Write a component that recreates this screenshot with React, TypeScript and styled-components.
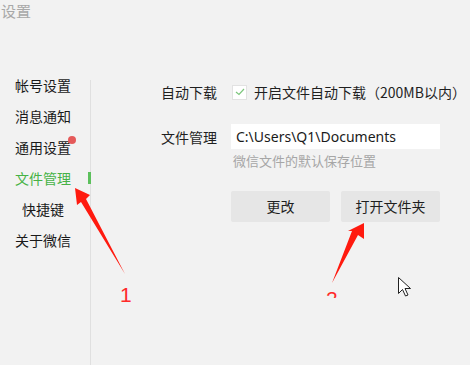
import React from "react";
import styled, { createGlobalStyle } from "styled-components";

const GlobalStyle = createGlobalStyle`
  html, body {
    margin: 0;
    padding: 0;
    background: #f2f2f2;
  }
  body {
    font-family: "Noto Sans CJK SC", "Noto Sans", sans-serif;
    color: #1f1f1f;
  }
`;

const menu = ["帐号设置", "消息通知", "通用设置", "文件管理", "快捷键", "关于微信"];

const App = () => {
  return (
    <Page>
      <GlobalStyle />
      <TitleBar>设置</TitleBar>
      <Main>
        <Sidebar>
          {menu.map((item, i) => (
            <MenuItem key={item} active={i === 3}>
              {item}
              {i === 2 && <RedDot />}
              {i === 3 && <ActiveMark />}
            </MenuItem>
          ))}
        </Sidebar>
        <Divider />
        <Content>
          <Row>
            <Label>自动下载</Label>
            <Checkbox>
              <svg width="10" height="8" viewBox="0 0 10 8">
                <path d="M1 4 L4 6.5 L9 1" fill="none" stroke="#7cc67c" strokeWidth="1.2" />
              </svg>
            </Checkbox>
            <span>开启文件自动下载（200MB以内）</span>
          </Row>
          <InputRow>
            <Label>文件管理</Label>
            <PathBox>C:\Users\Q1\Documents</PathBox>
          </InputRow>
          <Hint>微信文件的默认保存位置</Hint>
          <Buttons>
            <Button>更改</Button>
            <Button>打开文件夹</Button>
          </Buttons>
        </Content>
      </Main>

      <Annotations width="470" height="365" viewBox="0 0 470 365">
        <polygon points="75,188 90,195 86,199 125,274 81,202 77,205" fill="#ff1a0f" />
        <polygon points="364,223 364,239 358,235 332,283 352,231 348,231" fill="#ff1a0f" />
        <path
          d="M398.5 277.5 L398.5 293.5 L402.5 289.5 L405.5 296 L408 295 L405 288.5 L410.5 288.5 Z"
          fill="#fff"
          stroke="#222"
          strokeWidth="1"
        />
      </Annotations>
      <Number1>1</Number1>
      <Number2>
        <span>2</span>
      </Number2>
    </Page>
  );
};

export default App;

const Page = styled.div`
  position: relative;
  width: 470px;
  height: 365px;
  overflow: hidden;
  display: flex;
  flex-direction: column;
  background: #f2f2f2;
`;

const TitleBar = styled.div`
  height: 70px;
  padding-left: 1px;
  font-size: 15px;
  line-height: 22px;
  color: #a8a8a8;
`;

const Main = styled.div`
  flex: 1;
  display: flex;
`;

const Sidebar = styled.div`
  width: 88px;
  display: flex;
  flex-direction: column;
`;

const MenuItem = styled.div<{ active?: boolean }>`
  position: relative;
  height: 31px;
  line-height: 31px;
  width: 86px;
  text-align: center;
  font-size: 14px;
  color: ${(p) => (p.active ? "#46b246" : "#1a1a1a")};
`;

const RedDot = styled.span`
  position: absolute;
  left: 68px;
  top: 4px;
  width: 8px;
  height: 8px;
  border-radius: 50%;
  background: #e55a5a;
`;

const ActiveMark = styled.span`
  position: absolute;
  left: 88px;
  top: 9px;
  width: 3px;
  height: 12px;
  background: #5cc05c;
`;

const Divider = styled.div`
  width: 1px;
  margin-top: 10px;
  margin-left: 2px;
  background: #e0e0e0;
`;

const Content = styled.div`
  flex: 1;
  padding-left: 70px;
  padding-top: 8px;
  display: flex;
  flex-direction: column;
  font-size: 14px;
  color: #1f1f1f;
`;

const Row = styled.div`
  height: 28px;
  display: flex;
  align-items: center;
`;

const InputRow = styled(Row)`
  height: 25px;
  margin-top: 18px;
`;

const Label = styled.div`
  width: 70px;
  flex-shrink: 0;
`;

const Checkbox = styled.div`
  width: 13px;
  height: 13px;
  margin-left: 1px;
  margin-right: 7px;
  background: #fff;
  border: 1px solid #e2e2e2;
  display: flex;
  align-items: center;
  justify-content: center;
`;

const PathBox = styled.div`
  width: 204px;
  height: 25px;
  line-height: 25px;
  padding-left: 5px;
  background: #fff;
  font-size: 14px;
  color: #1a1a1a;
  font-family: "Noto Sans", "Noto Sans CJK SC", sans-serif;
`;

const Hint = styled.div`
  margin-top: 3px;
  padding-left: 72px;
  font-size: 13px;
  line-height: 18px;
  color: #a6a6a6;
`;

const Buttons = styled.div`
  margin-top: 21px;
  padding-left: 70px;
  display: flex;
  gap: 11px;
`;

const Button = styled.div`
  width: 99px;
  height: 31px;
  line-height: 31px;
  text-align: center;
  background: #e6e6e6;
  border-radius: 2px;
  font-size: 14px;
  color: #1f1f1f;
`;

const Annotations = styled.svg`
  position: absolute;
  left: 0;
  top: 0;
  pointer-events: none;
`;

const Number1 = styled.div`
  position: absolute;
  left: 120px;
  top: 284px;
  font-family: "Liberation Sans", Arial, sans-serif;
  font-size: 21px;
  line-height: 22px;
  color: #ff2a2a;
`;

const Number2 = styled.div`
  position: absolute;
  left: 326px;
  top: 291px;
  height: 7px;
  overflow: hidden;
  font-family: "Liberation Sans", Arial, sans-serif;
  font-size: 21px;
  line-height: 22px;
  color: #ff2a2a;
  span {
    display: block;
    margin-top: -3px;
  }
`;
